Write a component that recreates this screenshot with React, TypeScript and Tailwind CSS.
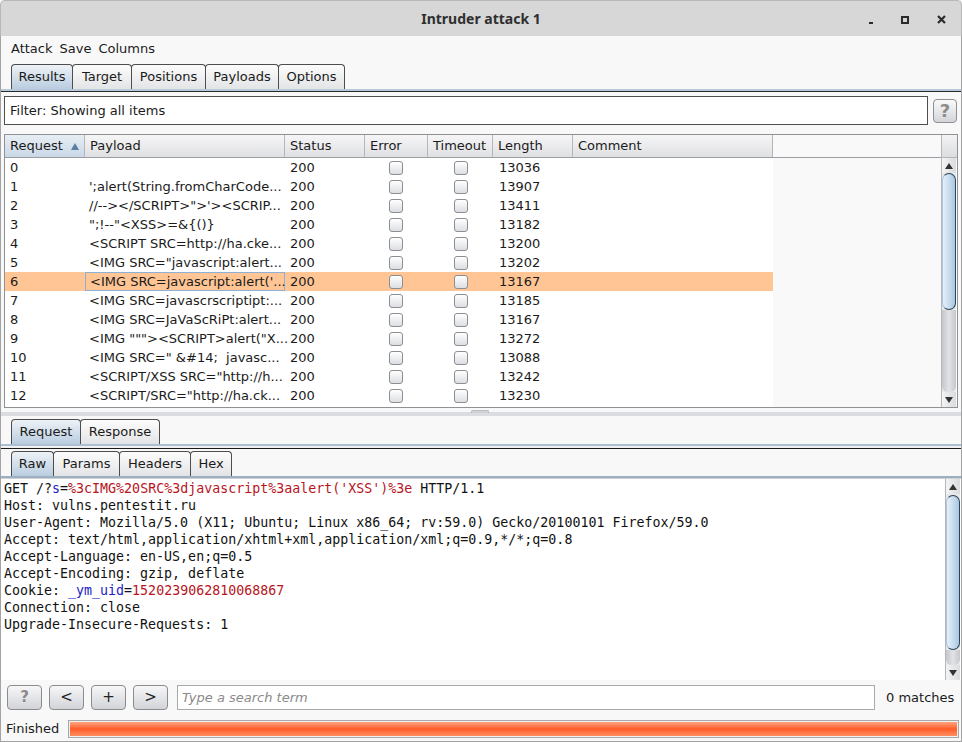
import React from 'react';

const ROWS: [string, string, string][] = [
    ['0', '', '13036'],
    ['1', "';alert(String.fromCharCode...", '13907'],
    ['2', '//--></SCRIPT>">\'><SCRIP...', '13411'],
    ['3', '";!--"<XSS>=&{()}', '13182'],
    ['4', '<SCRIPT SRC=http://ha.cke...', '13200'],
    ['5', '<IMG SRC="javascript:alert...', '13202'],
    ['6', "<IMG SRC=javascript:alert('...", '13167'],
    ['7', '<IMG SRC=javascrscriptipt:...', '13185'],
    ['8', '<IMG SRC=JaVaScRiPt:alert...', '13167'],
    ['9', '<IMG """><SCRIPT>alert("X...', '13272'],
    ['10', '<IMG SRC=" &#14;  javasc...', '13088'],
    ['11', '<SCRIPT/XSS SRC="http://h...', '13242'],
    ['12', '<SCRIPT/SRC="http://ha.ck...', '13230'],
    ['', '', ''],
];

const COLS = [
    { label: 'Request', w: 'w-[80px]' },
    { label: 'Payload', w: 'w-[200px]' },
    { label: 'Status', w: 'w-[80px]' },
    { label: 'Error', w: 'w-[63px]' },
    { label: 'Timeout', w: 'w-[65px]' },
    { label: 'Length', w: 'w-[80px]' },
    { label: 'Comment', w: 'w-[200px]' },
];

function Tab({ label, width, active }: { label: string; width: string; active?: boolean }) {
    return (
        <div
            className={`${width} h-[25px] flex items-center justify-center border border-b-0 border-[#4d4d4d] rounded-t-[4px] -mr-px ${
                active ? 'bg-gradient-to-b from-[#eef2f6] to-[#b9cde0]' : 'bg-gradient-to-b from-[#fcfcfc] to-[#e3e4e6]'
            }`}
        >
            {label}
        </div>
    );
}

function Checkbox() {
    return (
        <div className="w-[14px] h-[14px] rounded-[3px] border border-[#8b8e93] bg-gradient-to-b from-[#ffffff] to-[#dcdee2]" />
    );
}

function ScrollBar({ thumbTop, thumb }: { thumbTop: string; thumb: string }) {
    return (
        <div className="w-[15px] flex flex-col border-l border-[#b5b7bb] bg-[#e8e9eb]">
            <div className="h-[15px] flex items-center justify-center bg-gradient-to-r from-[#f4f4f5] to-[#dadbde]">
                <svg width="8" height="6" viewBox="0 0 8 6"><path d="M4 0L8 6H0z" fill="#333" /></svg>
            </div>
            <div className={`${thumbTop} shrink-0`} />
            <div className={`${thumb} shrink-0 rounded-[7px] border border-[#2c4257] border-l-[#a9c4dc] bg-gradient-to-r from-[#e6f0f9] via-[#c9ddef] to-[#aac6e0]`} />
            <div className="flex-1 bg-gradient-to-r from-[#c4c6ca] via-[#e2e3e6] to-[#c4c6ca] rounded-b-[6px]" />
            <div className="h-[15px] flex items-center justify-center bg-gradient-to-r from-[#f4f4f5] to-[#dadbde]">
                <svg width="8" height="6" viewBox="0 0 8 6"><path d="M0 0H8L4 6z" fill="#333" /></svg>
            </div>
        </div>
    );
}

function SmallButton({ children, grey }: { children: React.ReactNode; grey?: boolean }) {
    return (
        <div
            className={`w-[35px] h-[25px] flex items-center justify-center rounded-[4px] border border-[#8a8c90] bg-gradient-to-b from-[#f7f7f8] to-[#d2d4d8] text-[15px] ${
                grey ? 'text-[#8a8a8a] font-bold' : 'text-[#222]'
            }`}
        >
            {children}
        </div>
    );
}

export default function App() {
    return (
        <div className="w-[962px] h-[742px] flex flex-col bg-[#f8f8f8] overflow-hidden font-['DejaVu_Sans',sans-serif] text-[13px] text-[#1b1b1b]">
            {/* title bar */}
            <div className="h-[36px] shrink-0 flex items-center justify-center relative bg-[#d7d7d7] rounded-t-[5px] border border-b-0 border-[#b8b8b8]">
                <div className="font-['Noto_Sans',sans-serif] font-bold text-[14px] text-[#2f2f2f]">Intruder attack 1</div>
                <div className="absolute right-[15px] top-[14px] flex items-center gap-[28px]">
                    <div className="w-[4px] h-[2px] bg-[#2b2b2b] mt-[7px]" />
                    <div className="w-[8px] h-[8px] border-2 border-[#2b2b2b]" />
                    <svg width="9" height="9" viewBox="0 0 9 9"><path d="M1 1L8 8M8 1L1 8" stroke="#2b2b2b" strokeWidth="2.2" /></svg>
                </div>
            </div>

            <div className="flex-1 flex flex-col border-x border-b border-[#a3a3a3] min-h-0">
                {/* menu */}
                <div className="h-[24px] shrink-0 flex items-center gap-[7px] px-[10px] pt-[1px]">
                    <span>Attack</span>
                    <span>Save</span>
                    <span>Columns</span>
                </div>

                {/* main tabs */}
                <div className="mt-[4px] pl-[10px] flex items-end">
                    <Tab label="Results" width="w-[62px]" active />
                    <Tab label="Target" width="w-[60px]" />
                    <Tab label="Positions" width="w-[75px]" />
                    <Tab label="Payloads" width="w-[74px]" />
                    <Tab label="Options" width="w-[67px]" />
                </div>
                <div className="h-[2px] bg-[#b7c9da]" />
                <div className="h-px bg-[#2a2a2a]" />

                {/* filter */}
                <div className="mt-[4px] pl-[3px] pr-[4px] flex items-center gap-[5px]">
                    <div className="flex-1 h-[29px] flex items-center pl-[5px] bg-white border border-[#4f4f4f]">
                        Filter: Showing all items
                    </div>
                    <div className="w-[24px] h-[24px] flex items-center justify-center rounded-[4px] border border-[#8d8f93] bg-gradient-to-b from-[#fafafa] to-[#d3d5d9] text-[18px] font-bold text-[#8c8c8c]">
                        ?
                    </div>
                </div>

                {/* results table */}
                <div className="mt-[9px] mx-[3px] h-[274px] shrink-0 flex border border-[#8f9195] bg-[#f9f9f9] overflow-hidden">
                    <div className="flex-1 flex flex-col min-w-0">
                        <div className="h-[23px] shrink-0 flex border-b border-[#9c9ea2]">
                            {COLS.map((c, i) => (
                                <div
                                    key={c.label}
                                    className={`${c.w} h-full flex items-center justify-between pl-[5px] pr-[5px] border-r border-[#b4b6ba] ${
                                        i === 0 ? 'bg-gradient-to-b from-[#e8eef4] to-[#c9d8e7]' : 'bg-gradient-to-b from-[#f6f6f7] to-[#dfe0e3]'
                                    }`}
                                >
                                    <span>{c.label}</span>
                                    {i === 0 && (
                                        <svg width="8" height="7" viewBox="0 0 8 7"><path d="M4 0L8 7H0z" fill="#5b7ea5" /></svg>
                                    )}
                                </div>
                            ))}
                            <div className="flex-1 bg-[#f9f9f9]" />
                        </div>
                        {ROWS.map(([id, payload, len], idx) => {
                            const sel = id === '6';
                            return (
                                <div key={idx} className="h-[19px] shrink-0 flex">
                                    <div className={`flex ${sel ? 'bg-[#ffc594]' : 'bg-white'}`}>
                                        <div className="w-[80px] pl-[5px] flex items-center">{id}</div>
                                        <div
                                            className={`w-[200px] pl-[4px] flex items-center whitespace-pre ${
                                                sel ? 'border border-[#8eb0d4]' : ''
                                            }`}
                                        >
                                            {payload}
                                        </div>
                                        <div className="w-[80px] pl-[5px] flex items-center">{id === '' ? '' : '200'}</div>
                                        <div className="w-[63px] flex items-center justify-center pr-[1px]">
                                            <Checkbox />
                                        </div>
                                        <div className="w-[65px] flex items-center justify-center">
                                            <Checkbox />
                                        </div>
                                        <div className="w-[80px] pl-[6px] flex items-center">{len}</div>
                                        <div className="w-[200px]" />
                                    </div>
                                    <div className="flex-1" />
                                </div>
                            );
                        })}
                    </div>
                    <div className="flex flex-col">
                        <div className="h-[23px] w-[16px] shrink-0 bg-gradient-to-b from-[#f3f3f4] to-[#dcdde0] border-b border-l border-[#b4b6ba]" />
                        <div className="flex-1 flex min-h-0 pr-px">
                            <ScrollBar thumbTop="h-0" thumb="h-[137px]" />
                        </div>
                    </div>
                </div>

                {/* splitter */}
                <div className="h-[11px] shrink-0 flex flex-col justify-center relative">
                    <div className="h-[4px] bg-[#dadce1]" />
                    <div className="absolute left-[470px] top-[2px] w-[18px] h-[3px] rounded-t-[2px] bg-[#cfd2d7] border border-b-0 border-[#b9bcc2]" />
                </div>

                {/* request/response tabs */}
                <div className="pl-[10px] flex items-end">
                    <Tab label="Request" width="w-[70px]" active />
                    <Tab label="Response" width="w-[80px]" />
                </div>
                <div className="h-[2px] bg-[#adc0d3]" />
                <div className="h-[2px] bg-[#f0f0f0]" />
                <div className="h-px bg-[#1a1a1a]" />

                <div className="mt-[2px] pl-[10px] flex items-end">
                    <Tab label="Raw" width="w-[43px]" active />
                    <Tab label="Params" width="w-[67px]" />
                    <Tab label="Headers" width="w-[72px]" />
                    <Tab label="Hex" width="w-[42px]" />
                </div>
                <div className="h-[2px] bg-[#9db0c3]" />

                {/* raw request text */}
                <div className="h-[202px] shrink-0 flex bg-white border-t border-[#d0d0d0]">
                    <div className="flex-1 pl-[3px] pt-[1px] font-['DejaVu_Sans_Mono',monospace] text-[13.3px] leading-[17px] whitespace-pre text-[#111]">
                        <div>
                            GET /?<span className="text-[#2222c8]">s</span>=
                            <span className="text-[#b8141c]">%3cIMG%20SRC%3djavascript%3aalert('XSS')%3e</span> HTTP/1.1
                        </div>
                        <div>Host: vulns.pentestit.ru</div>
                        <div>User-Agent: Mozilla/5.0 (X11; Ubuntu; Linux x86_64; rv:59.0) Gecko/20100101 Firefox/59.0</div>
                        <div>Accept: text/html,application/xhtml+xml,application/xml;q=0.9,*/*;q=0.8</div>
                        <div>Accept-Language: en-US,en;q=0.5</div>
                        <div>Accept-Encoding: gzip, deflate</div>
                        <div>
                            Cookie: <span className="text-[#2222c8]">_ym_uid</span>=<span className="text-[#b8141c]">1520239062810068867</span>
                        </div>
                        <div>Connection: close</div>
                        <div>Upgrade-Insecure-Requests: 1</div>
                    </div>
                    <div className="flex pr-px">
                        <ScrollBar thumbTop="h-px" thumb="h-[155px]" />
                    </div>
                </div>

                {/* search row */}
                <div className="mt-[5px] pl-[6px] pr-[5px] flex items-center">
                    <div className="flex gap-[7px]">
                        <SmallButton grey>?</SmallButton>
                        <SmallButton>&lt;</SmallButton>
                        <SmallButton>+</SmallButton>
                        <SmallButton>&gt;</SmallButton>
                    </div>
                    <div className="ml-[9px] w-[698px] h-[25px] flex items-center pl-[4px] bg-white border border-[#a9a9a9] italic text-[#8a8a8a]">
                        Type a search term
                    </div>
                    <div className="ml-[11px]">0 matches</div>
                </div>

                {/* status */}
                <div className="mt-[9px] pl-[5px] pr-[2px] flex items-center">
                    <span>Finished</span>
                    <div className="ml-[9px] flex-1 h-[18px] border border-[#a7a7a7] p-px bg-[#f2f2f2]">
                        <div className="h-full bg-gradient-to-b from-[#ffa27c] via-[#ff5c26] to-[#ff8d5f]" />
                    </div>
                </div>
            </div>
        </div>
    );
}
